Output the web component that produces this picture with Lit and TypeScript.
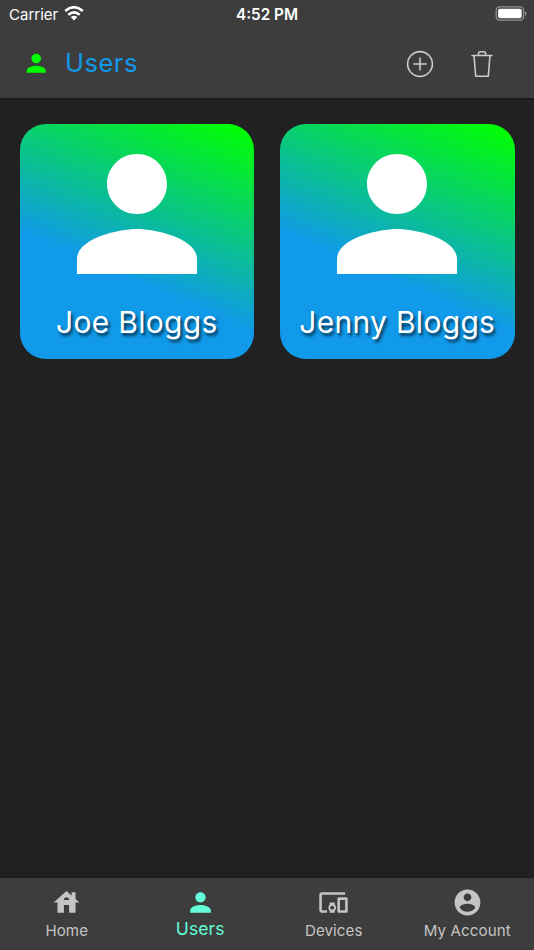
import { LitElement, html, css, svg } from "lit";
import { customElement, property } from "lit/decorators.js";
import { classMap } from "lit/directives/class-map.js";

const person = svg`<path d="M12 12c2.210 0 4-1.790 4-4s-1.790-4-4-4-4 1.790-4 4 1.790 4 4 4zm0 2c-2.670 0-8 1.340-8 4v2h16v-2c0-2.660-5.330-4-8-4z"/>`;
const home = svg`<path d="M19 9.300V4h-3v2.600L12 3 2 12h3v8h5v-6h4v6h5v-8h3l-3-2.700zm-9 .7c0-1.100.9-2 2-2s2 .9 2 2h-4z"/>`;
const devices = svg`<path d="M3 6h18V4H3c-1.100 0-2 .9-2 2v12c0 1.100.9 2 2 2h4v-2H3V6zm10 6H9v1.780c-.61.550-1 1.330-1 2.220s.39 1.670 1 2.220V20h4v-1.780c.61-.55 1-1.340 1-2.220s-.39-1.670-1-2.220V12zm-2 5.500c-.83 0-1.500-.67-1.500-1.500s.67-1.500 1.500-1.500 1.500.67 1.500 1.500-.67 1.500-1.500 1.500zM22 8h-6c-.5 0-1 .5-1 1v10c0 .5.5 1 1 1h6c.5 0 1-.5 1-1V9c0-.5-.5-1-1-1zm-1 10h-4v-8h4v8z"/>`;
const account = svg`<path d="M12 2C6.480 2 2 6.480 2 12s4.480 10 10 10 10-4.480 10-10S17.520 2 12 2zm0 3c1.660 0 3 1.340 3 3s-1.340 3-3 3-3-1.340-3-3 1.340-3 3-3zm0 14.200c-2.500 0-4.710-1.280-6-3.220.03-1.990 4-3.080 6-3.080 1.990 0 5.970 1.090 6 3.080-1.290 1.940-3.500 3.220-6 3.220z"/>`;

@customElement("user-card")
export class UserCard extends LitElement {
  @property() name = "";

  static styles = css`
    :host {
      display: flex;
      flex-direction: column;
      align-items: center;
      box-sizing: border-box;
      height: 234.6px;
      border-radius: 26px;
      background: linear-gradient(23.500deg, #1199ea 37.500%, #00ff00 98%);
      color: #fff;
    }
    .avatar {
      width: 180px;
      height: 180px;
      flex: none;
      fill: currentColor;
    }
    .name {
      font-size: 30px;
      line-height: 36px;
      letter-spacing: 0.3px;
      white-space: nowrap;
      text-shadow: 2px 2.500px 3px rgba(0, 0, 0, 0.65);
    }
  `;

  render() {
    return html`
      <svg class="avatar" viewBox="0 0 24 24">${person}</svg>
      <div class="name">${this.name}</div>
    `;
  }
}

@customElement("app-root")
export class AppRoot extends LitElement {
  private users = ["Joe Bloggs", "Jenny Bloggs"];

  private tabs = [
    { label: "Home", icon: home, active: false },
    { label: "Users", icon: person, active: true },
    { label: "Devices", icon: devices, active: false },
    { label: "My Account", icon: account, active: false },
  ];

  static styles = css`
    :host {
      display: flex;
      flex-direction: column;
      height: 950px;
      overflow: hidden;
      background: #212121;
      color: #fff;
      font-family: Inter, "Liberation Sans", sans-serif;
    }
    svg {
      display: block;
      flex: none;
    }
    .top {
      height: 98px;
      flex: none;
      background: #3d3d3d;
      box-shadow: 0 1px 2px rgba(0, 0, 0, 0.3);
    }
    .status {
      display: grid;
      grid-template-columns: 1fr auto 1fr;
      align-items: center;
      height: 28px;
      padding: 0 7px 0 9px;
    }
    .carrier {
      display: flex;
      align-items: center;
      gap: 6px;
      font-size: 15px;
    }
    .carrier svg {
      margin-top: -2px;
    }
    .clock {
      font-weight: 600;
      font-size: 15.300px;
      margin-left: -2px;
    }
    .battery {
      justify-self: end;
      margin-top: -1px;
    }
    .bar {
      display: flex;
      align-items: center;
      height: 70px;
      padding: 0 38px 0 22px;
      box-sizing: border-box;
    }
    .lead {
      fill: #00ff00;
    }
    .title {
      flex: 1;
      margin: -1px 0 0 14.500px;
      font-size: 25.500px;
      line-height: 32px;
      font-weight: 400;
      color: #1199ea;
      letter-spacing: 0.5px;
    }
    .actions {
      display: flex;
      gap: 34px;
      padding-top: 1px;
      fill: none;
      stroke: #cbcbcb;
      stroke-width: 1.600;
      stroke-linecap: round;
      stroke-linejoin: round;
    }
    .cards {
      flex: 1;
      display: grid;
      grid-template-columns: 1fr 1fr;
      align-content: start;
      gap: 26px;
      padding: 26px 19.500px;
    }
    .tabs {
      display: grid;
      grid-template-columns: repeat(4, 1fr);
      height: 72.500px;
      flex: none;
      background: #3d3d3d;
      box-shadow: 0 -1px 1px rgba(0, 0, 0, 0.15);
    }
    .tab {
      display: flex;
      flex-direction: column;
      align-items: center;
      padding-top: 9.500px;
      color: #c4c4c4;
      font-size: 15.100px;
      line-height: 20px;
      letter-spacing: 0.1px;
      white-space: nowrap;
    }
    .tab svg {
      fill: currentColor;
    }
    .label {
      margin-top: 2.500px;
    }
    .active {
      color: #64ffda;
      font-size: 17.500px;
    }
    .active .label {
      margin-top: 1px;
    }
  `;

  render() {
    return html`
      <header class="top">
        <div class="status">
          <div class="carrier">
            <span>Carrier</span>
            <svg width="20" height="15" viewBox="0 0 20 15" fill="none" stroke="#fff" stroke-width="2.600">
              <path d="M1.200 5.100Q10-2.600 18.800 5.100M4.300 8.700Q10 3.900 15.700 8.700" />
              <path d="M10 14.500L6.700 11.100Q10 8.600 13.300 11.100Z" fill="#fff" stroke="none" />
            </svg>
          </div>
          <div class="clock">4:52 PM</div>
          <svg class="battery" width="32" height="15" viewBox="0 0 32 15">
            <rect x="1.200" y=".8" width="27.400" height="13.400" rx="3.600" fill="none" stroke="#929292" stroke-width="1.300" />
            <rect x="3.100" y="2.700" width="23.600" height="9.600" rx="1.800" fill="#fff" />
            <path d="M30 5.200c2 .8 2 3.800 0 4.600z" fill="#929292" />
          </svg>
        </div>
        <div class="bar">
          <svg class="lead" width="28.500" height="28.500" viewBox="0 0 24 24">${person}</svg>
          <h1 class="title">Users</h1>
          <div class="actions">
            <svg width="28" height="28" viewBox="0 0 28 28">
              <circle cx="14" cy="14" r="12.400" />
              <path d="M14 8v12M8 14h12" />
            </svg>
            <svg width="28" height="28" viewBox="0 0 28 28">
              <path d="M4 5.500h20M6 5.500l1.700 20.700h12.600L22 5.500M10.500 5.300V3.400q0-1.700 1.700-1.700h3.600q1.700 0 1.700 1.700v1.900" />
            </svg>
          </div>
        </div>
      </header>
      <main class="cards">
        ${this.users.map((name) => html`<user-card .name=${name}></user-card>`)}
      </main>
      <nav class="tabs">
        ${this.tabs.map(
          (t) => html`
            <div class=${classMap({ tab: true, active: t.active })}>
              <svg width="31" height="31" viewBox="0 0 24 24">${t.icon}</svg>
              <span class="label">${t.label}</span>
            </div>
          `
        )}
      </nav>
    `;
  }
}
